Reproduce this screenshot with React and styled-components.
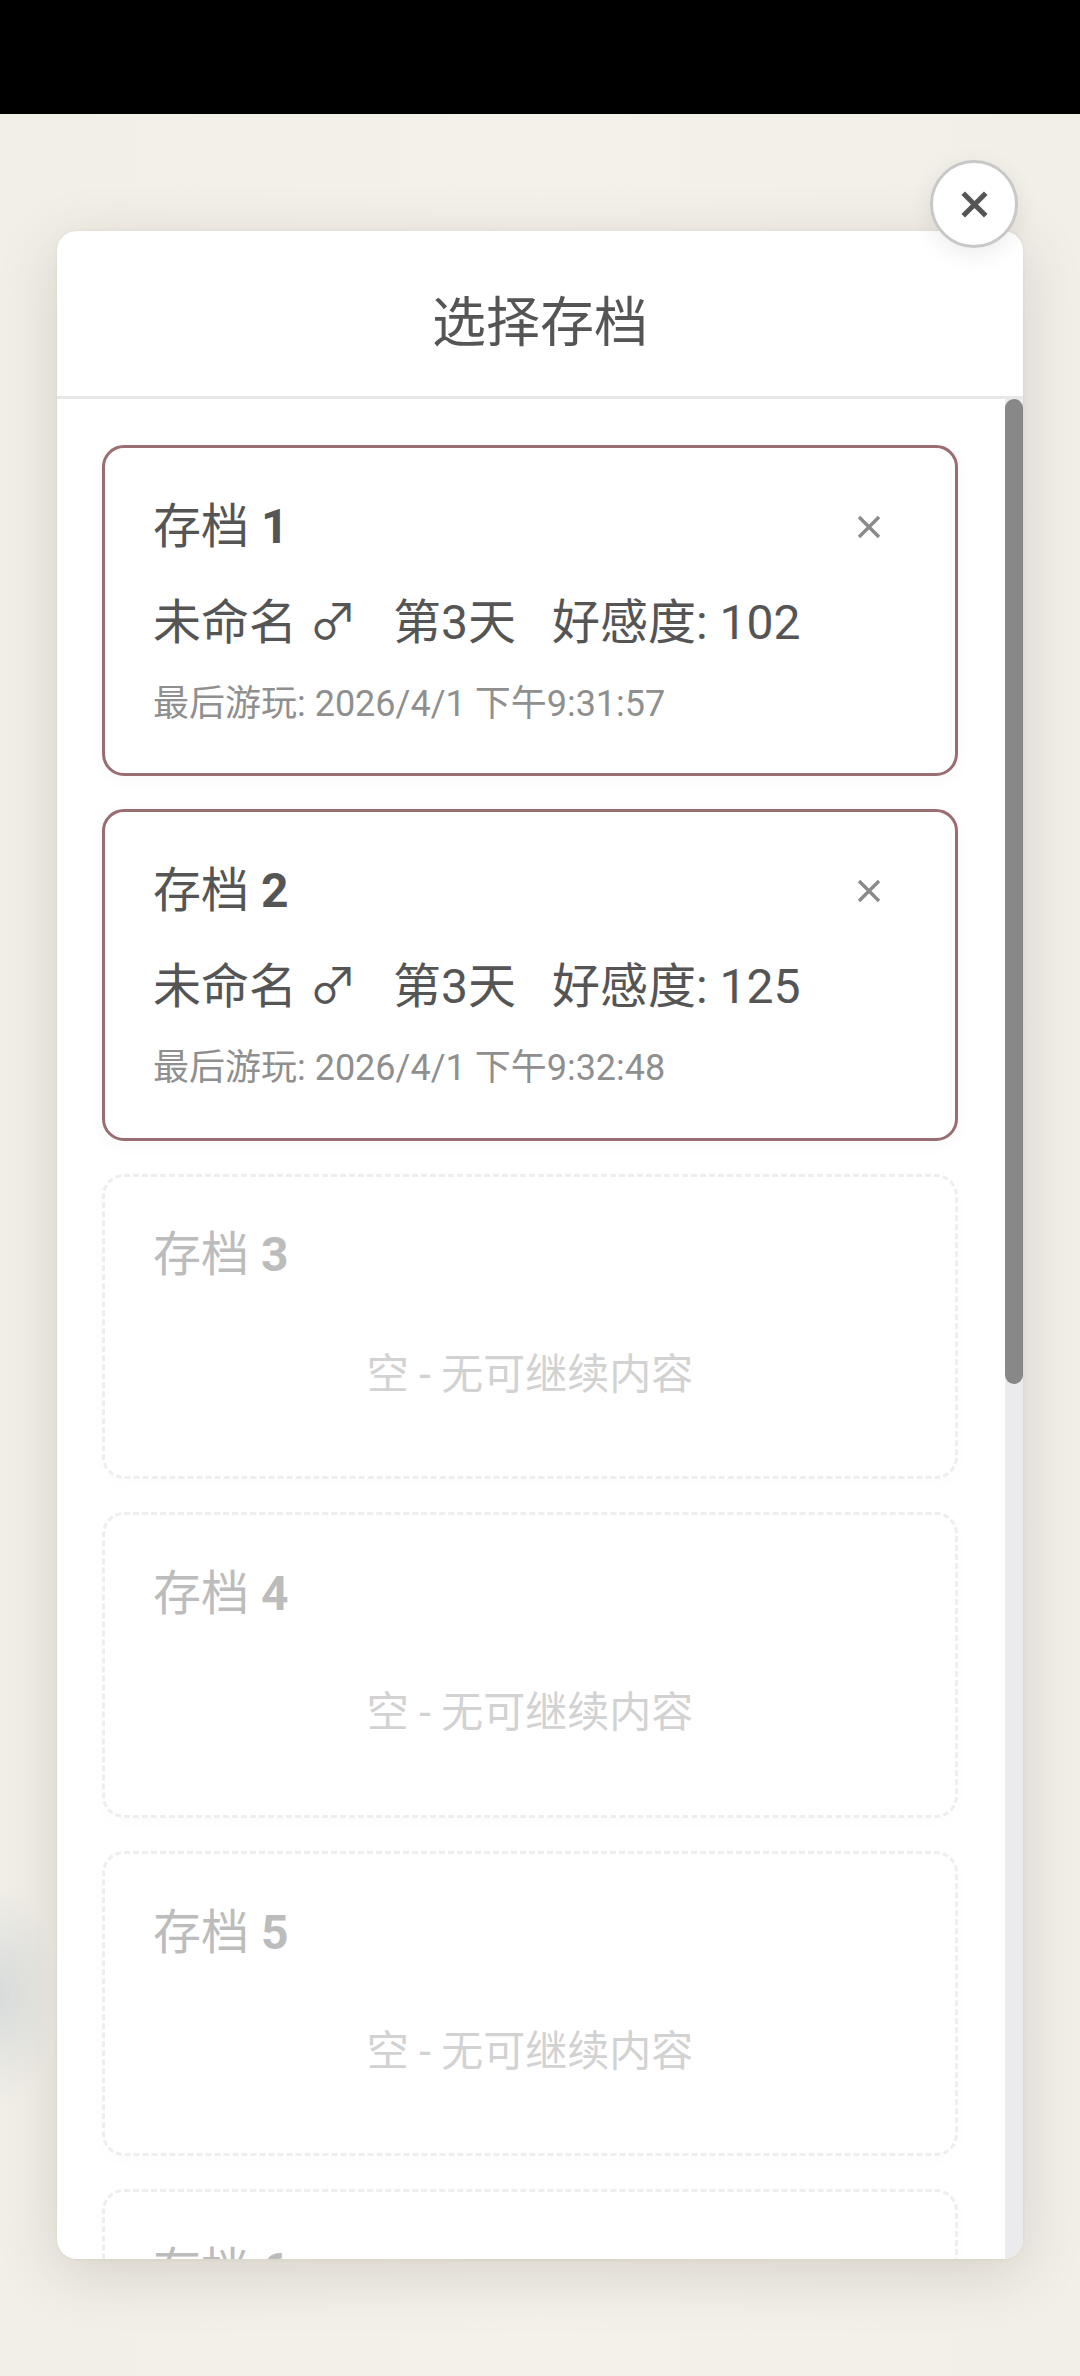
import { createGlobalStyle, styled } from "styled-components";

const GlobalStyle = createGlobalStyle`
  html, body {
    margin: 0;
    padding: 0;
    background: #f3f0e9;
  }
  body {
    font-family: Roboto, "Noto Sans CJK SC", sans-serif;
    color: #555;
  }
  * {
    box-sizing: border-box;
  }
`;

const Screen = styled.div`
  width: 1080px;
  height: 2376px;
  display: flex;
  flex-direction: column;
  overflow: hidden;
`;

const StatusBar = styled.div`
  height: 114px;
  flex-shrink: 0;
  background: #000;
`;

const Backdrop = styled.div`
  flex: 1;
  display: flex;
  align-items: center;
  justify-content: center;
  background:
    radial-gradient(ellipse 60px 110px at 0px 1880px, rgba(205, 212, 214, 0.7), transparent),
    linear-gradient(90deg, #f2efe8 0%, #f4f1ea 50%, #f2efe8 100%);
`;

const Modal = styled.div`
  position: relative;
  width: 966px;
  height: 2028px;
  display: flex;
  flex-direction: column;
  background: #fff;
  border-radius: 20px;
  box-shadow: 0 14px 60px rgba(70, 60, 40, 0.17), 0 0 4px rgba(0, 0, 0, 0.05);
`;

const CloseButton = styled.button`
  position: absolute;
  top: -71px;
  right: 5px;
  width: 88px;
  height: 88px;
  padding: 0;
  display: flex;
  align-items: center;
  justify-content: center;
  background: #fff;
  border: 3px solid #c8c8c8;
  border-radius: 50%;
  box-shadow: 0 6px 24px rgba(0, 0, 0, 0.08);
  cursor: pointer;
`;

const Header = styled.div`
  flex-shrink: 0;
  padding: 58px 0 37px;
  text-align: center;
  border-bottom: 3px solid #e8e8e8;
`;

const Title = styled.h2`
  margin: 0;
  font-size: 54px;
  line-height: 1.3;
  font-weight: 400;
  color: #555;
`;

const ListFrame = styled.div`
  flex: 1;
  min-height: 0;
  display: flex;
  overflow: hidden;
  border-radius: 0 0 20px 20px;
`;

const SlotList = styled.div`
  flex: 1;
  min-width: 0;
  overflow: hidden;
  display: flex;
  flex-direction: column;
  gap: 33px;
  padding: 46px 47px 46px 45px;
`;

const ScrollTrack = styled.div`
  width: 18px;
  flex-shrink: 0;
  background: #ebebed;
`;

const ScrollThumb = styled.div`
  height: 985px;
  background: #888;
  border-radius: 9px;
`;

const SlotCard = styled.div`
  flex-shrink: 0;
  padding: 48px 48px 46px;
  background: #fff;
  border-radius: 22px;
  border: 3px ${({ $empty }) => ($empty ? "dashed #eeeeee" : "solid #9a6d72")};
  box-shadow: 0 4px 18px rgba(0, 0, 0, ${({ $empty }) => ($empty ? 0.015 : 0.03)});
`;

const SlotHead = styled.div`
  display: flex;
  align-items: center;
  justify-content: space-between;
  height: 62px;
  margin-bottom: 34px;
`;

const SlotName = styled.div`
  font-size: 48px;
  line-height: 1.3;
  color: ${({ $empty }) => ($empty ? "#bcbcbc" : "#555")};

  b {
    font-weight: 700;
  }
`;

const DeleteButton = styled.button`
  width: 76px;
  height: 62px;
  padding: 0;
  display: flex;
  align-items: center;
  justify-content: center;
  background: none;
  border: none;
  cursor: pointer;
`;

const InfoLine = styled.div`
  display: flex;
  gap: 36px;
  font-size: 48px;
  line-height: 1.3;
  color: #555;
  margin-bottom: 26px;
  white-space: nowrap;
`;

const PlayedAt = styled.div`
  font-size: 36px;
  line-height: 1.3;
  color: #8f8f8f;
`;

const EmptyNote = styled.div`
  padding: 27px 0 28px;
  text-align: center;
  font-size: 42px;
  line-height: 1.3;
  color: #d2d2d2;
`;

const slots = [
  { id: 1, name: "未命名", gender: "♂", day: 3, affection: 102, playedAt: "2026/4/1 下午9:31:57" },
  { id: 2, name: "未命名", gender: "♂", day: 3, affection: 125, playedAt: "2026/4/1 下午9:32:48" },
  { id: 3 },
  { id: 4 },
  { id: 5 },
  { id: 6 },
];

function CrossIcon({ size, stroke, color }) {
  return (
    <svg width={size} height={size} viewBox="0 0 24 24">
      <path d="M2 2 L22 22 M22 2 L2 22" stroke={color} strokeWidth={stroke} fill="none" />
    </svg>
  );
}

function Slot({ slot }) {
  const empty = !slot.name;
  return (
    <SlotCard $empty={empty}>
      <SlotHead>
        <SlotName $empty={empty}>
          存档 <b>{slot.id}</b>
        </SlotName>
        {!empty && (
          <DeleteButton aria-label="删除">
            <CrossIcon size={24} stroke={3.4} color="#8a8a8a" />
          </DeleteButton>
        )}
      </SlotHead>
      {empty ? (
        <EmptyNote>空 - 无可继续内容</EmptyNote>
      ) : (
        <>
          <InfoLine>
            <span>
              {slot.name} {slot.gender}
            </span>
            <span>第{slot.day}天</span>
            <span>好感度: {slot.affection}</span>
          </InfoLine>
          <PlayedAt>最后游玩: {slot.playedAt}</PlayedAt>
        </>
      )}
    </SlotCard>
  );
}

export default function App() {
  return (
    <>
      <GlobalStyle />
      <Screen>
        <StatusBar />
        <Backdrop>
          <Modal>
            <CloseButton aria-label="关闭">
              <CrossIcon size={27} stroke={4.5} color="#555" />
            </CloseButton>
            <Header>
              <Title>选择存档</Title>
            </Header>
            <ListFrame>
              <SlotList>
                {slots.map((slot) => (
                  <Slot key={slot.id} slot={slot} />
                ))}
              </SlotList>
              <ScrollTrack>
                <ScrollThumb />
              </ScrollTrack>
            </ListFrame>
          </Modal>
        </Backdrop>
      </Screen>
    </>
  );
}
